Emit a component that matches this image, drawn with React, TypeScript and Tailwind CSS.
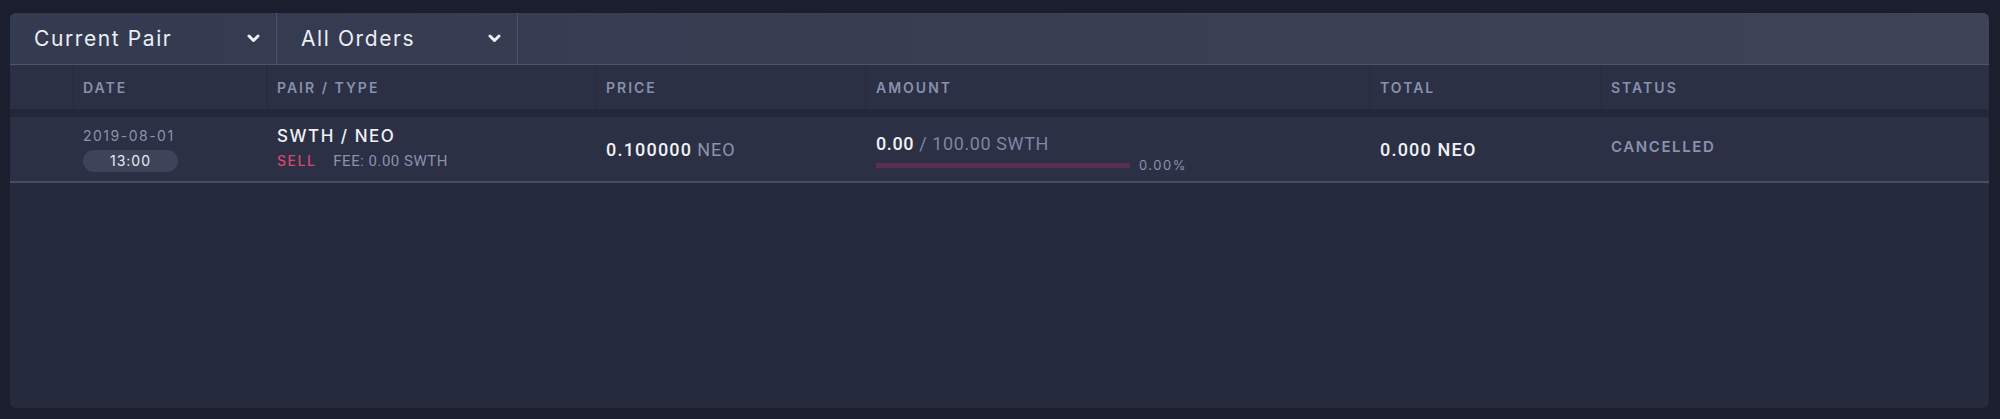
import React from "react";

const geo = "font-['Inter','Noto_Sans',sans-serif]";
const rob = "font-['Roboto','Liberation_Sans',sans-serif]";

function Chevron() {
  return (
    <svg width="13" height="9" viewBox="0 0 13 9" fill="none">
      <polyline points="2,2 6.5,6.5 11,2" stroke="#eef0f5" strokeWidth="3" strokeLinecap="round" strokeLinejoin="round" />
    </svg>
  );
}

function Dropdown({ label, width }: { label: string; width: string }) {
  return (
    <div className={`${width} flex items-center justify-between pl-6 pr-4 border-r border-[#4b5169]`}>
      <span className={`${geo} text-[21px] tracking-[1.6px] text-[#eceef4]`}>{label}</span>
      <Chevron />
    </div>
  );
}

const cols = "grid grid-cols-[62px_194px_329px_270px_504px_231px_1fr]";
const head = `${geo} text-[14px] font-semibold tracking-[2px] text-[#8790ad] pl-[9px] flex items-center border-l-2 border-[#282d40]`;

export default function App() {
  return (
    <div className="h-[419px] bg-[#1a1e2e] pt-[13px] pl-[10px] pr-[11px] pb-[11px]">
      <div className="h-full rounded-md bg-[#252a3d] overflow-hidden flex flex-col">
        <div className="h-[52px] flex bg-gradient-to-r from-[#343a4f] to-[#3e4357] border-b border-[#4d546c]">
          <Dropdown label="Current Pair" width="w-[267px]" />
          <Dropdown label="All Orders" width="w-[241px]" />
        </div>

        <div className={`${cols} h-[44px] bg-[#2b3044]`}>
          <div className="bg-[#2b3044]" />
          <div className={head}>DATE</div>
          <div className={head}>PAIR / TYPE</div>
          <div className={head}>PRICE</div>
          <div className={head}>AMOUNT</div>
          <div className={head}>TOTAL</div>
          <div className={head}>STATUS</div>
        </div>

        <div className="h-[8px] bg-[#22273a]" />

        <div className={`${cols} h-[66px] bg-[#2b3045] border-b-2 border-[#464d66]`}>
          <div />
          <div className="pl-[11px] pt-[12px] flex flex-col items-start">
            <span className={`${geo} text-[14px] leading-[14px] tracking-[1.5px] text-[#8a92ad]`}>2019-08-01</span>
            <span className={`${geo} mt-[7px] w-[95px] h-[22px] rounded-full bg-[#3d4459] flex items-center justify-center text-[14px] leading-none tracking-[1px] text-[#e8eaf0]`}>
              13:00
            </span>
          </div>
          <div className="pl-[11px] pt-[11px] flex flex-col">
            <span className={`${geo} text-[17px] leading-[17px] font-medium tracking-[1.5px] text-[#f0f1f5]`}>SWTH / NEO</span>
            <div className="flex items-center gap-[17px] mt-[9px]">
              <span className={`${geo} text-[14px] leading-[14px] font-medium tracking-[1.5px] text-[#d9466b]`}>SELL</span>
              <span className={`${rob} text-[15px] leading-[14px] tracking-[0.5px] text-[#8a92ad]`}>FEE: 0.00 SWTH</span>
            </div>
          </div>
          <div className="pl-[11px] pt-[24px] flex items-start">
            <span className={`${rob} text-[18px] leading-[18px] font-medium tracking-[1.2px] text-[#f0f1f5]`}>0.100000</span>
            <span className={`${rob} ml-[5px] text-[18px] leading-[18px] tracking-[1px] text-[#8a92ad]`}>NEO</span>
          </div>
          <div className="pl-[11px] pt-[18px] flex flex-col">
            <div className={`${rob} text-[18px] leading-[18px] tracking-[0.6px]`}>
              <span className="font-medium text-[#f0f1f5]">0.00</span>
              <span className="text-[#7d86a2]"> / 100.00 SWTH</span>
            </div>
            <div className="flex items-center mt-[6px]">
              <div className="w-[254px] h-[5px] bg-[#5a2f4d]" />
              <span className={`${geo} ml-[9px] text-[13px] leading-none tracking-[1.5px] text-[#8a92ad]`}>0.00%</span>
            </div>
          </div>
          <div className="pl-[11px] pt-[24px] flex items-start">
            <span className={`${rob} text-[18px] leading-[18px] font-medium tracking-[1.2px] text-[#f0f1f5]`}>0.000 NEO</span>
          </div>
          <div className="pl-[11px] pt-[22px] flex items-start">
            <span className={`${geo} text-[15px] leading-[15px] font-semibold tracking-[1.6px] text-[#8a92ad]`}>CANCELLED</span>
          </div>
        </div>

        <div className="flex-1" />
      </div>
    </div>
  );
}
